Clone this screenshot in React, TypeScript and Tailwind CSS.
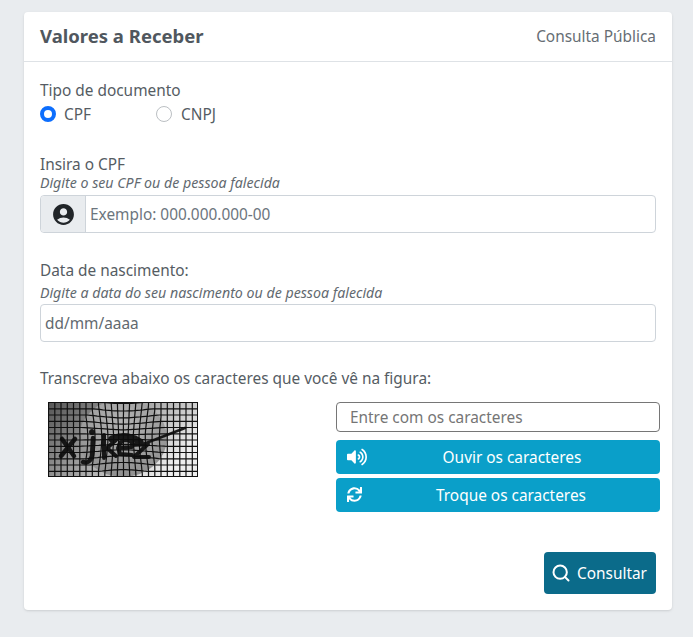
import { FaVolumeUp, FaSync } from "react-icons/fa";
import { MdAccountCircle } from "react-icons/md";
import { Search } from "lucide-react";

const warp = (x: number, y: number): [number, number] => {
  const dx = x - 75;
  const dy = y - 36;
  const r = Math.sqrt(dx * dx + (dy * dy) / 0.8);
  const R = 44;
  if (r >= R) return [x, y];
  const t = 1 - r / R;
  const k = 1 - 0.3 * t;
  return [75 + dx * k, 36 + dy * k];
};

const line = (pts: [number, number][]) =>
  "M" + pts.map(([a, b]) => `${a.toFixed(1)} ${b.toFixed(1)}`).join("L");

function Captcha() {
  const s = 6.25;
  const steps = Array.from({ length: 51 }, (_, i) => i * 3);
  const vs = Array.from({ length: 25 }, (_, i) => i * s);
  const hs = Array.from({ length: 13 }, (_, i) => i * s);
  return (
    <svg width="150" height="75" viewBox="0 0 150 75" className="block">
      <defs>
        <linearGradient id="g" x1="0" y1="0" x2="1" y2="0.5">
          <stop offset="0" stopColor="#555" />
          <stop offset="0.5" stopColor="#a0a0a0" />
          <stop offset="1" stopColor="#eee" />
        </linearGradient>
        <radialGradient id="g2" cx="0.5" cy="0.3" r="0.65">
          <stop offset="0" stopColor="#b4b4b4" />
          <stop offset="1" stopColor="#929292" />
        </radialGradient>
        <filter id="b" x="-5%" y="-5%" width="110%" height="110%">
          <feGaussianBlur stdDeviation="0.6" />
        </filter>
      </defs>
      <rect width="150" height="75" fill="url(#g)" />
      <ellipse cx="75" cy="36" rx="44" ry="39" fill="url(#g2)" />
      <g stroke="#111" strokeWidth="1.2" fill="none">
        {vs.map((x) => (
          <path key={"v" + x} d={line(steps.slice(0, 26).map((y) => warp(x + 0.5, y)))} />
        ))}
        {hs.map((y) => (
          <path key={"h" + y} d={line(steps.map((x) => warp(x, y + 0.5)))} />
        ))}
      </g>
      <g stroke="#0c0c0c" fill="none" strokeLinecap="round" strokeLinejoin="round" filter="url(#b)" opacity="0.92">
        <path d="M14 37 L26 54 M27 37 L13 54" strokeWidth="4.5" />
        <circle cx="44" cy="30" r="2.5" fill="#0c0c0c" strokeWidth="1" />
        <path d="M45 36 L44 54 Q42 62 35 60" strokeWidth="4.5" />
        <path d="M56 33 L56 56 M58 47 L68 38 M59 46 L68 54" strokeWidth="4" />
        <path d="M70 46 L84 45 Q86 38 76 38 Q68 42 72 52 L84 53" strokeWidth="4" />
        <path d="M84 43 L100 42 L86 55 L101 55" strokeWidth="4" />
        <path d="M64 37 Q78 31 92 40" strokeWidth="7" />
        <path d="M93 43 L137 26" strokeWidth="2.6" />
      </g>
      <rect x="0.5" y="0.5" width="149" height="74" fill="none" stroke="#111" />
    </svg>
  );
}

export default function App() {
  return (
    <div
      className="min-h-[637px] bg-[#e9ecef] pt-3 pl-6 pr-[21px] pb-[27px] text-[#555c63] text-[15.4px]"
      style={{ fontFamily: '"Noto Sans", sans-serif' }}
    >
      <div className="bg-white rounded shadow-sm">
        <div className="h-[50px] flex items-center justify-between px-4 border-b border-[#dee2e6]">
          <h1 className="text-[18.5px] font-bold text-[#50575e] -mt-0.5">Valores a Receber</h1>
          <span className="text-[#666d74]">Consulta Pública</span>
        </div>
        <div className="px-4 pt-[17px] pb-4">
          <div className="leading-[24px]">Tipo de documento</div>
          <div className="flex items-center h-6 -mt-px">
            <span className="w-4 h-4 rounded-full border-[4px] border-[#0d6efd] bg-white" />
            <span className="ml-2 w-[92px] pt-0.5">CPF</span>
            <span className="w-4 h-4 rounded-full border border-[#bbbfc3] bg-white" />
            <span className="ml-[9px] pt-0.5">CNPJ</span>
          </div>

          <div className="mt-[27px] leading-[24px]">Insira o CPF</div>
          <div className="text-[14.2px] italic leading-[14px] -mt-px mb-[5px] text-[#62696f]">
            Digite o seu CPF ou de pessoa falecida
          </div>
          <div className="flex h-[38px] border border-[#ced4da] rounded">
            <div className="w-[45px] shrink-0 bg-[#e9ecef] border-r border-[#ced4da] rounded-l flex items-center justify-center">
              <MdAccountCircle size={25} className="text-[#212529]" />
            </div>
            <div className="flex items-center pl-1 pt-0.5 text-[#6c757d]">Exemplo: 000.000.000-00</div>
          </div>

          <div className="mt-[26px] mb-[3px] leading-[24px]">Data de nascimento:</div>
          <div className="text-[14.2px] italic leading-[14px] mb-1 text-[#62696f]">
            Digite a data do seu nascimento ou de pessoa falecida
          </div>
          <div className="flex items-center h-[38px] border border-[#ced4da] rounded pl-1 pt-0.5 text-[#62696f]">
            dd/mm/aaaa
          </div>

          <div className="mt-[25px] leading-[24px]">
            Transcreva abaixo os caracteres que você vê na figura:
          </div>
          <div className="mt-[11px] flex -mr-1">
            <div className="ml-2 w-[288px] shrink-0">
              <Captcha />
            </div>
            <div className="flex-1 flex flex-col">
              <div className="h-[30px] border border-[#767676] rounded-sm flex items-center pl-[13px] pt-0.5 text-[#757575]">
                Entre com os caracteres
              </div>
              <button className="mt-2 h-[34px] bg-[#0a9fc9] rounded-sm text-white flex items-center relative justify-center pl-[28px] pt-0.5">
                <FaVolumeUp size={20} className="absolute left-[11px] top-[7px]" />
                Ouvir os caracteres
              </button>
              <button className="mt-1 h-[34px] bg-[#0a9fc9] rounded-sm text-white flex items-center relative justify-center pl-[26px] pt-0.5">
                <FaSync size={15} className="absolute left-[11px] top-[9px]" />
                Troque os caracteres
              </button>
            </div>
          </div>
          <div className="flex justify-end mt-10">
            <button className="h-[42px] w-[112px] bg-[#0b6b8a] rounded-sm text-white flex items-center pl-[7px] gap-[6px] pt-0.5">
              <Search size={20} strokeWidth={2.4} className="-mt-0.5" />
              Consultar
            </button>
          </div>
        </div>
      </div>
    </div>
  );
}
